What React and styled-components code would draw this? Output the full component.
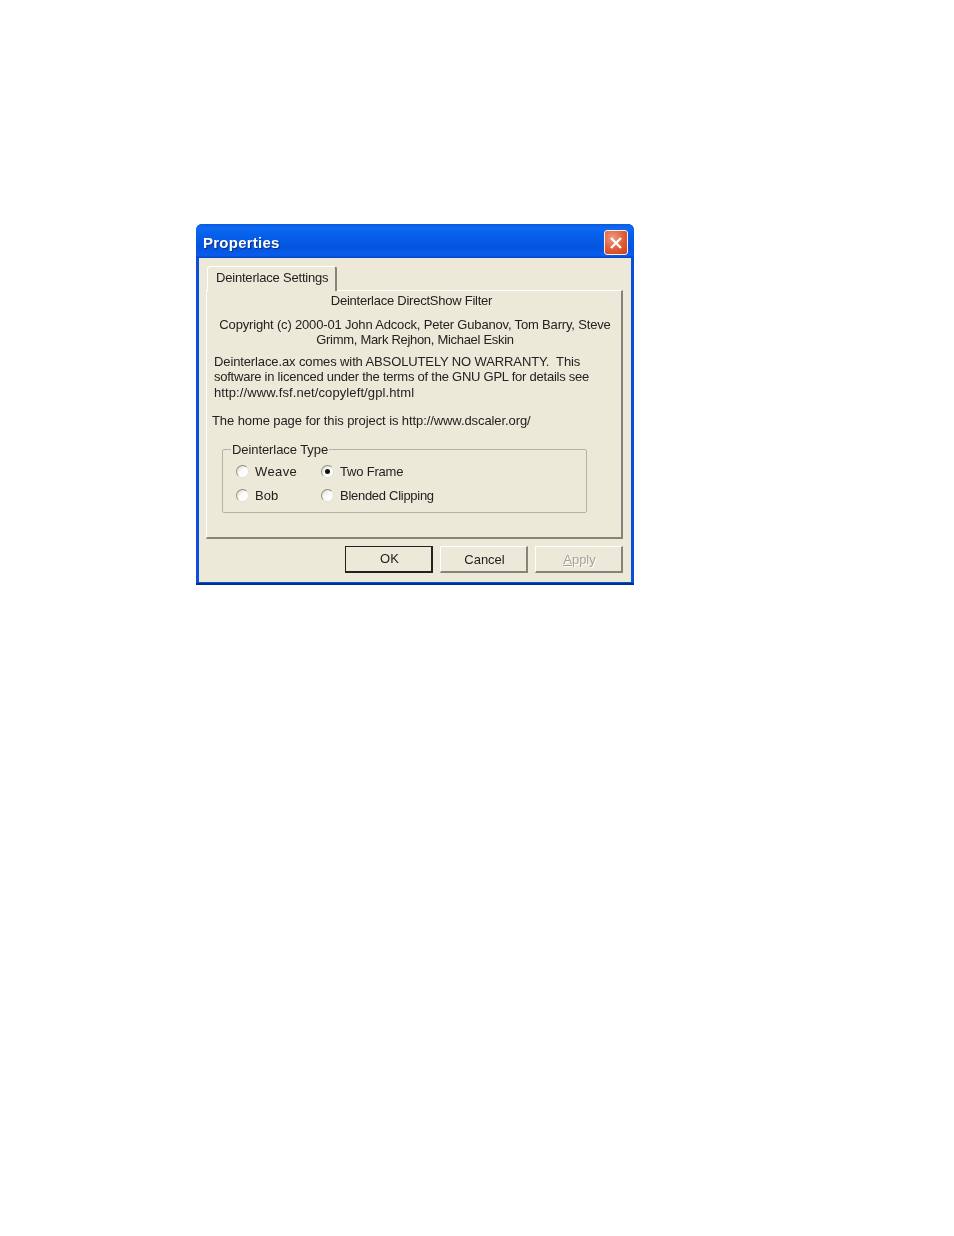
import React from "react";
import styled, { createGlobalStyle } from "styled-components";

const GlobalStyle = createGlobalStyle`
  html, body {
    margin: 0;
    padding: 0;
    background: #fff;
  }
  body {
    font-family: "Liberation Sans", Arial, sans-serif;
    font-size: 13px;
    color: #222;
  }
`;

const Page = styled.div`
  min-height: 1236px;
  padding: 224px 0 0 196px;
  box-sizing: border-box;
`;

const Dialog = styled.div`
  width: 438px;
  height: 361px;
  display: flex;
  flex-direction: column;
  border-radius: 6px 6px 0 0;
  background: linear-gradient(180deg, #0b4fd8 calc(100% - 2px), #00308f calc(100% - 2px));
  overflow: hidden;
  filter: blur(0.35px);
`;

const TitleBar = styled.div`
  height: 34px;
  flex: none;
  display: flex;
  align-items: center;
  justify-content: space-between;
  padding: 3px 6px 0 7px;
  box-sizing: border-box;
  background: linear-gradient(180deg, #0a5ae0 0%, #0f6bf2 12%, #0660ea 30%, #0355e0 70%, #0a5cec 92%, #0442c0 100%);
`;

const Title = styled.span`
  font-weight: 700;
  font-size: 15px;
  letter-spacing: 0.25px;
  color: #fff;
  text-shadow: 1px 1px 1px #0a2f8c;
`;

const CloseButton = styled.button`
  width: 24px;
  height: 25px;
  padding: 0;
  display: flex;
  align-items: center;
  justify-content: center;
  border: 1px solid #f4efe9;
  border-radius: 3px;
  background: radial-gradient(circle at 35% 30%, #ee9b80 0%, #df5a35 55%, #c9411d 100%);
`;

const Body = styled.div`
  flex: 1;
  margin: 0 3px 3px;
  padding: 8px 8px 0 7px;
  display: flex;
  flex-direction: column;
  background: #ece9d8;
`;

const TabStrip = styled.div`
  display: flex;
  padding-left: 1px;
  position: relative;
  z-index: 1;
  margin-bottom: -1px;
`;

const Tab = styled.div`
  width: 130px;
  height: 25px;
  box-sizing: border-box;
  padding: 3px 0 0 8px;
  background: #ece9d8;
  border-top: 1px solid #fff;
  border-left: 1px solid #fff;
  border-right: 2px solid #85837a;
  border-radius: 3px 3px 0 0;
  white-space: nowrap;
  letter-spacing: -0.2px;
`;

const Panel = styled.div`
  height: 249px;
  box-sizing: border-box;
  padding-top: 2px;
  background: #ece9d8;
  border-top: 1px solid #fff;
  border-left: 1px solid #fff;
  border-right: 2px solid #85837a;
  border-bottom: 2px solid #85837a;
`;

const Text = styled.div`
  line-height: 15.5px;
  white-space: nowrap;
  margin-top: ${(p) => p.$top || 0}px;
  padding-left: ${(p) => p.$left || 0}px;
  padding-right: ${(p) => p.$right || 0}px;
  text-align: ${(p) => p.$align || "left"};
  letter-spacing: ${(p) => p.$track || 0}px;
`;

const GroupBox = styled.fieldset`
  width: 365px;
  height: 71px;
  box-sizing: border-box;
  margin: 13px 0 0 15px;
  padding: 0 0 0 13px;
  border: 1px solid #b5b3a5;
  border-radius: 2px;
`;

const Legend = styled.legend`
  padding: 0 1px;
  margin-left: -5px;
  line-height: 16px;
  letter-spacing: -0.08px;
`;

const RadioGrid = styled.div`
  display: grid;
  grid-template-columns: 85px 1fr;
  row-gap: 8px;
  margin-top: 6px;
`;

const RadioRow = styled.div`
  display: flex;
  align-items: center;
  gap: 6px;
  height: 16px;
  letter-spacing: ${(p) => p.$track || 0}px;
`;

const RadioCircle = styled.span`
  width: 13px;
  height: 13px;
  flex: none;
  display: flex;
  align-items: center;
  justify-content: center;
  border-radius: 50%;
  box-sizing: border-box;
  border: 1px solid #8f8e82;
  border-bottom-color: #e4e2d6;
  border-right-color: #e4e2d6;
  background: linear-gradient(135deg, #d9d7cb 0%, #fbfbf8 45%, #ffffff 100%);
`;

const RadioDot = styled.span`
  width: 5px;
  height: 5px;
  border-radius: 50%;
  background: #111;
`;

const ButtonRow = styled.div`
  display: flex;
  justify-content: flex-end;
  gap: 7px;
  margin-top: 7px;
`;

const Button = styled.button`
  width: 88px;
  height: 27px;
  padding: 0 0 ${(p) => (p.$default ? 1 : 0)}px 2px;
  font-family: "Liberation Sans", Arial, sans-serif;
  font-size: 13px;
  color: ${(p) => (p.$disabled ? "#a5a397" : "#222")};
  text-shadow: ${(p) => (p.$disabled ? "1px 1px 0 #fff" : "none")};
  background: #ece9d8;
  border-style: solid;
  border-color: ${(p) => (p.$default ? "#222" : "#fff #85837a #85837a #fff")};
  border-width: 1px 2px 2px 1px;
`;

const Radio = ({ label, checked, track }) => (
  <RadioRow $track={track}>
    <RadioCircle>{checked && <RadioDot />}</RadioCircle>
    <span>{label}</span>
  </RadioRow>
);

const App = () => {
  return (
    <Page>
      <GlobalStyle />
      <Dialog>
        <TitleBar>
          <Title>Properties</Title>
          <CloseButton>
            <svg width="14" height="14" viewBox="0 0 14 14">
              <path d="M2 2 L12 12 M12 2 L2 12" stroke="#fff" strokeWidth="2.4" />
            </svg>
          </CloseButton>
        </TitleBar>
        <Body>
          <TabStrip>
            <Tab>Deinterlace Settings</Tab>
          </TabStrip>
          <Panel>
            <Text $align="center" $right={5} $track={-0.24}>Deinterlace DirectShow Filter</Text>
            <Text $align="center" $top={8} $left={2} $track={-0.17}>
              Copyright (c) 2000-01 John Adcock, Peter Gubanov, Tom Barry, Steve
            </Text>
            <Text $align="center" $left={2} $track={-0.3}>Grimm, Mark Rejhon, Michael Eskin</Text>
            <Text $left={7} $top={6} $track={-0.12}>
              Deinterlace.ax comes with ABSOLUTELY NO WARRANTY.&nbsp; This
            </Text>
            <Text $left={7} $track={-0.24}>
              software in licenced under the terms of the GNU GPL for details see
            </Text>
            <Text $left={7} $track={0.1}>http://www.fsf.net/copyleft/gpl.html</Text>
            <Text $left={5} $top={13} $track={-0.09}>The home page for this project is http://www.dscaler.org/</Text>
            <GroupBox>
              <Legend>Deinterlace Type</Legend>
              <RadioGrid>
                <Radio label="Weave" track={0.4} />
                <Radio label="Two Frame" checked track={-0.2} />
                <Radio label="Bob" />
                <Radio label="Blended Clipping" track={-0.28} />
              </RadioGrid>
            </GroupBox>
          </Panel>
          <ButtonRow>
            <Button $default>OK</Button>
            <Button>Cancel</Button>
            <Button $disabled><u>A</u>pply</Button>
          </ButtonRow>
        </Body>
      </Dialog>
    </Page>
  );
};

export default App;
